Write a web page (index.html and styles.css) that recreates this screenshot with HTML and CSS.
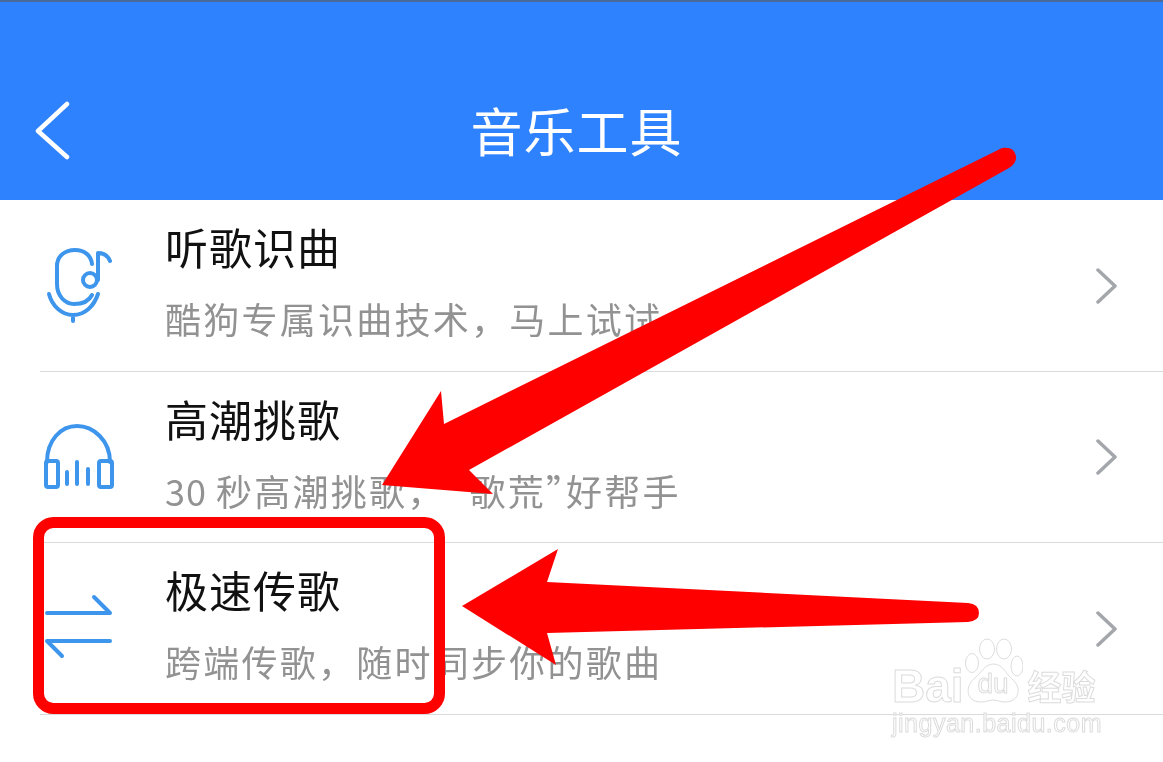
FILE: index.html
```html
<!DOCTYPE html>
<html lang="zh-CN">
<head>
  <meta charset="UTF-8">
  <title>音乐工具</title>
  <link rel="stylesheet" href="styles.css">
</head>
<body>
  <main class="screen">
    <header class="topbar">
      <svg class="back" width="36" height="60" viewBox="0 0 36 60"><path d="M32 3 3 30l29 26" /></svg>
      <h1>音乐工具</h1>
    </header>

    <ul class="tools">
      <li class="tool">
        <svg class="tool-icon" width="72" height="84" viewBox="0 0 72 84">
          <path d="M48 20C47 11 40 6 31 6 21 6 13 12 13 22v18c0 12 8 20 17 20 8 0 15-3 18-9" />
          <path d="M5 50c3 12 13 21 24 21 12 0 21-9 25-21M29 71v6" />
          <circle cx="46" cy="36" r="7" />
          <path d="M54 36V9c6 0 10 3 12 8" />
        </svg>
        <div class="tool-text">
          <h2>听歌识曲</h2>
          <p>酷狗专属识曲技术，马上试试</p>
        </div>
        <svg class="chevron" width="24" height="36" viewBox="0 0 24 36"><path d="M3 2l17 16L3 34" /></svg>
      </li>
      <li class="tool">
        <svg class="tool-icon" width="72" height="70" viewBox="0 0 72 70">
          <path d="M3 40C3 18 17 4 33 4s33 14 33 36" />
          <rect x="2" y="39" width="12" height="26" rx="2" />
          <rect x="55" y="39" width="13" height="26" rx="2" />
          <path d="M23 50v12M33 40v22M44 47v15" />
        </svg>
        <div class="tool-text">
          <h2>高潮挑歌</h2>
          <p><span class="num">30 </span>秒高潮挑歌，<span class="quote-open">“</span>歌荒<span class="quote">”</span>好帮手</p>
        </div>
        <svg class="chevron" width="24" height="36" viewBox="0 0 24 36"><path d="M3 2l17 16L3 34" /></svg>
      </li>
      <li class="tool">
        <svg class="tool-icon" width="72" height="70" viewBox="0 0 72 70">
          <path d="M3 19h63L50 3M66 47H3l15 15" />
        </svg>
        <div class="tool-text">
          <h2>极速传歌</h2>
          <p>跨端传歌，随时同步你的歌曲</p>
        </div>
        <svg class="chevron" width="24" height="36" viewBox="0 0 24 36"><path d="M3 2l17 16L3 34" /></svg>
      </li>
    </ul>

    <!-- annotations drawn over the screenshot -->
    <svg class="marks" width="1163" height="762" viewBox="0 0 1163 762">
      <path class="arrow" d="M1002 148Q1014 146 1016 156 1017 163 1009 168L469 470 493 494 382 485 441 391 444 424Z" />
      <path class="arrow" d="M968 603Q979 604 979 613 979 621 968 622L547 633 556 665 462 606 558 549 547 582Z" />
      <rect class="highlight" x="38.5" y="522.5" width="401" height="186" rx="15" />
    </svg>

    <div class="watermark">
      <div class="wm-logo">
        <span class="wm-bai">Bai</span>
        <svg class="wm-paw" width="60" height="65" viewBox="0 0 60 65">
          <ellipse cx="9" cy="25" rx="6.500" ry="9.500" />
          <ellipse cx="24" cy="11" rx="7.500" ry="10" />
          <ellipse cx="41" cy="11" rx="7.500" ry="10" />
          <ellipse cx="54" cy="28" rx="6" ry="10" />
          <path d="M30 26C22 26 18 35 12 40 2 47 2 64 18 64c5 0 8-2 12-2s7 2 12 2c15 0 17-15 7-23-7-6-9-15-19-15Z" />
          <text x="30" y="55">du</text>
        </svg>
        <span class="wm-cn">经验</span>
      </div>
      <div class="wm-url">jingyan.baidu.com</div>
    </div>
  </main>
</body>
</html>
```

FILE: styles.css
```css
* {
  box-sizing: border-box;
}

html,
body {
  margin: 0;
  height: 100%;
  overflow: hidden;
}

body {
  background: #fff;
  font-family: "Noto Sans CJK SC", "Noto Sans", sans-serif;
}

.screen {
  position: relative;
  width: 1163px;
  height: 762px;
  filter: blur(0.5px);
}

.topbar {
  position: relative;
  display: flex;
  align-items: center;
  justify-content: center;
  height: 200px;
  padding: 58px 10px 0 0;
  background: #2f82fe;
  border-top: 2px solid #4b6a9c;
}

.topbar h1 {
  margin: 0;
  color: #fff;
  font-size: 52px;
  font-weight: 400;
  line-height: 1;
  letter-spacing: 1px;
}

.back {
  position: absolute;
  left: 35px;
  top: 99px;
  fill: none;
  stroke: #fff;
  stroke-width: 4.500;
  stroke-linecap: round;
  stroke-linejoin: round;
}

.tools {
  margin: 0;
  padding: 0;
  list-style: none;
}

.tool {
  display: flex;
  align-items: center;
  height: 171.500px;
  padding: 0 44px;
  position: relative;
}

.tool::after {
  content: "";
  position: absolute;
  left: 40px;
  right: 0;
  bottom: 0;
  height: 1px;
  background: #d8dade;
}

.tool-icon {
  flex: none;
  fill: none;
  stroke: #3e95ec;
  stroke-width: 4;
  stroke-linecap: round;
  stroke-linejoin: round;
}

.tool-text {
  flex: 1;
  margin-left: 49px;
  padding-bottom: 10px;
}

.tool-text h2 {
  margin: 0 0 25px;
  color: #111;
  font-size: 43px;
  font-weight: 400;
  line-height: 50px;
  letter-spacing: 1px;
}

.tool-text p {
  margin: 0;
  color: #929292;
  font-size: 36px;
  line-height: 44px;
  letter-spacing: 2.250px;
}

.num {
  letter-spacing: 1px;
}

.quote-open {
  letter-spacing: 6px;
}

.quote {
  letter-spacing: -16px;
}

.chevron {
  flex: none;
  fill: none;
  stroke: #a3a6aa;
  stroke-width: 3.500;
  stroke-linecap: round;
  stroke-linejoin: round;
}

.marks {
  position: absolute;
  left: 0;
  top: 0;
}

.arrow {
  fill: #fe0000;
}

.highlight {
  fill: none;
  stroke: #fe0000;
  stroke-width: 11;
}

.watermark {
  position: absolute;
  left: 892px;
  top: 638px;
  color: #fff;
  font-family: "Liberation Sans", sans-serif;
  -webkit-text-stroke: 1px #dcdcdc;
}

.wm-logo {
  display: flex;
  align-items: flex-end;
}

.wm-bai {
  font-size: 46px;
  line-height: 34px;
  font-weight: 700;
}

.wm-paw {
  margin-left: -1px;
  fill: #fff;
  stroke: #dcdcdc;
  stroke-width: 1;
}

.wm-paw text {
  font-size: 28px;
  text-anchor: middle;
  -webkit-text-stroke: 0;
}

.wm-cn {
  margin-left: 5px;
  font-family: "Noto Sans CJK SC", sans-serif;
  font-size: 34px;
  line-height: 34px;
  font-weight: 700;
}

.wm-url {
  font-size: 25px;
  line-height: 30px;
  margin-top: 5px;
  letter-spacing: 0.500px;
}
```
